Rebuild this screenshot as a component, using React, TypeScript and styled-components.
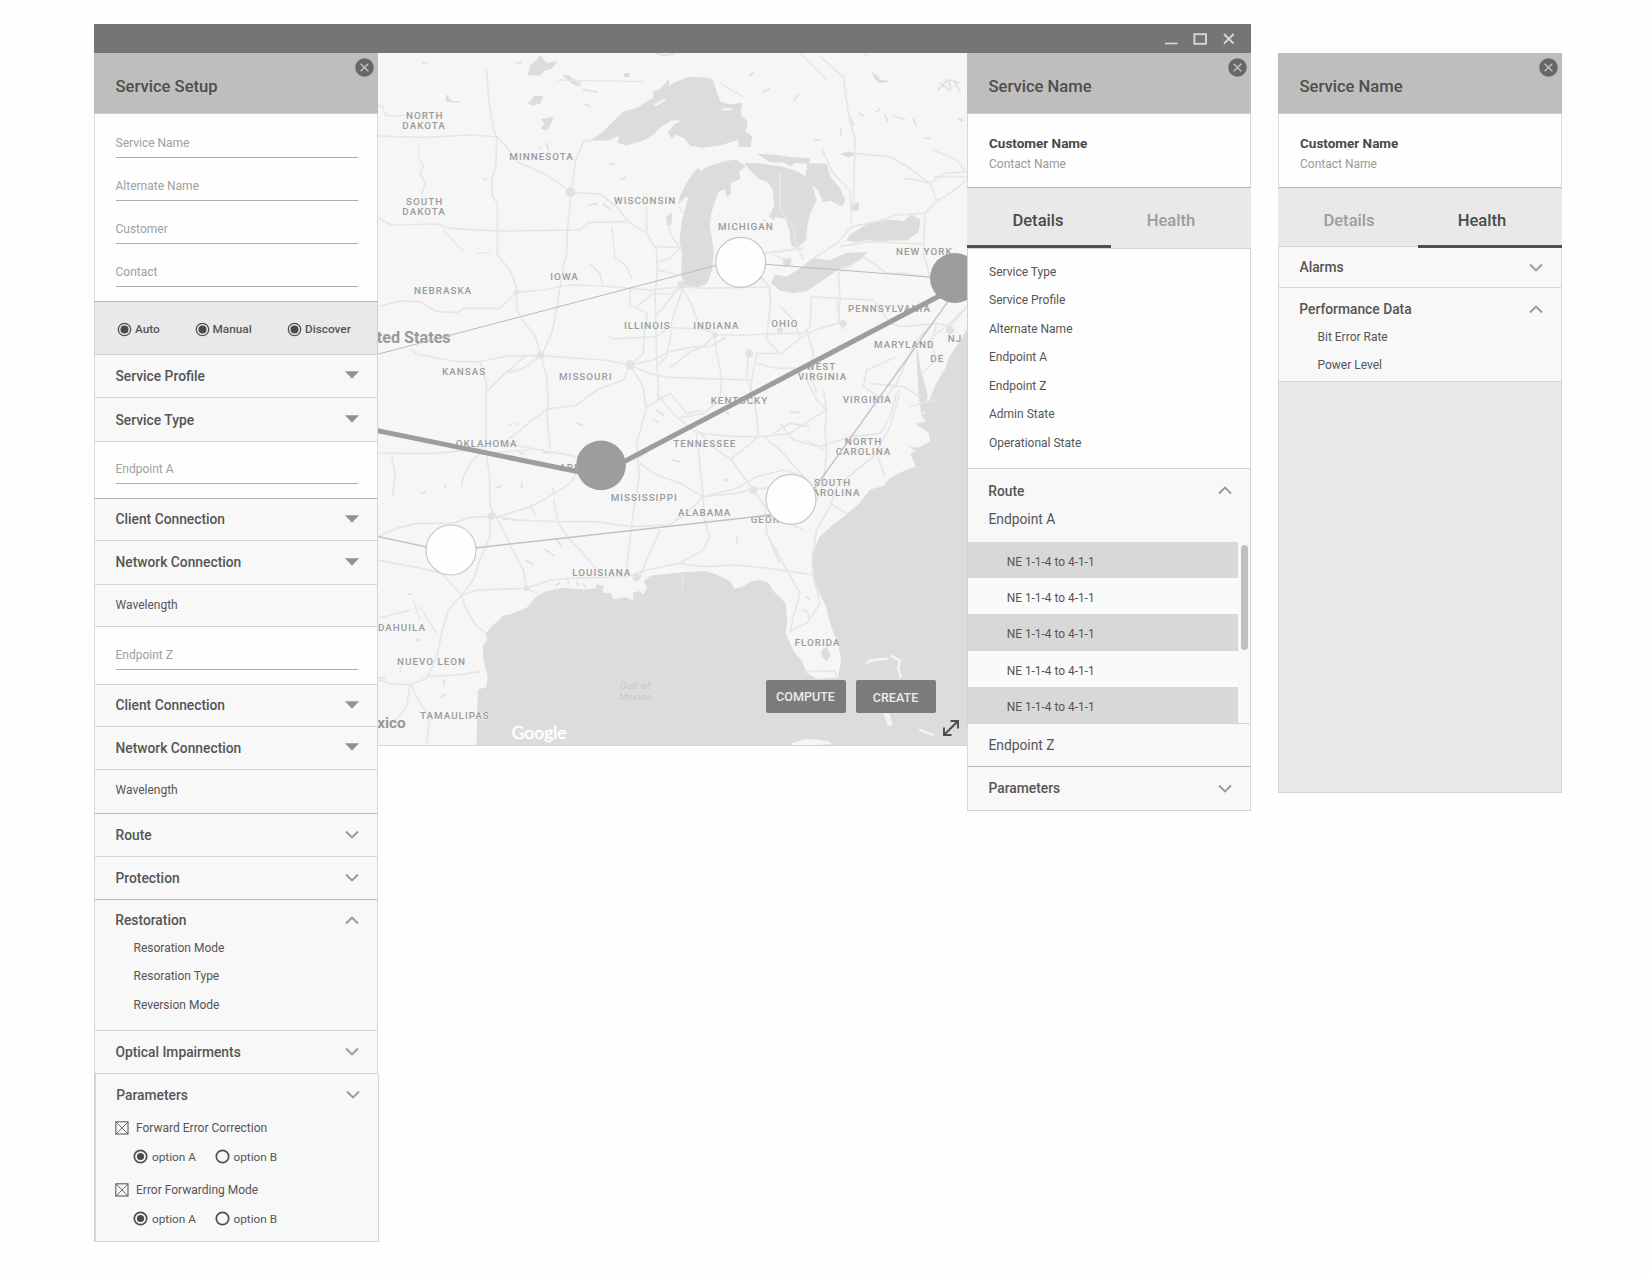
import React from "react";
import styled, { createGlobalStyle } from "styled-components";

const GlobalStyle = createGlobalStyle`
  * { box-sizing: border-box; }
  body {
    margin: 0;
    background: #fefefe;
    font-family: Roboto, "Liberation Sans", sans-serif;
    color: #555;
  }
`;

const Page = styled.main`
  display: flex;
  align-items: flex-start;
  width: 1650px;
  height: 1275px;
  padding: 24px 0 0 94px;
  gap: 27px;
  overflow: hidden;
`;

const AppWindow = styled.section`
  width: 1157px;
`;

const TitleBar = styled.header`
  display: flex;
  justify-content: flex-end;
  align-items: center;
  height: 29px;
  padding-right: 16px;
  background: #757575;
`;

const WindowBody = styled.div`
  display: flex;
  align-items: flex-start;
`;

const Panel = styled.aside<{ $detached?: boolean }>`
  width: 284px;
  flex: none;
  margin-top: ${(p) => (p.$detached ? 29 : 0)}px;
  height: ${(p) => (p.$detached ? "740px" : "auto")};
  background: ${(p) => (p.$detached ? "#e9e9e9" : "#f8f8f8")};
  box-shadow: inset 0 0 0 1px #d4d4d4;
`;

const PanelHeader = styled.div`
  display: flex;
  justify-content: space-between;
  height: 61px;
  padding: 5px 4px 0 21.5px;
  background: #bebebe;
  border-bottom: 1px solid #cfcfcf;
`;

const PanelTitle = styled.h2`
  margin: 19px 0 0;
  font-size: 16.6px;
  line-height: 20px;
  font-weight: 500;
  color: #4e4e4e;
`;

const FieldGroup = styled.div<{ $height: number; $top: number; $strong?: boolean }>`
  height: ${(p) => p.$height}px;
  padding: ${(p) => p.$top}px 20px 0 20.5px;
  background: #fefefe;
  border: solid #d8d8d8;
  border-width: 0 1px 1px;
  border-bottom-color: ${(p) => (p.$strong ? "#b4b4b4" : "#d6d6d6")};
`;

const Field = styled.div`
  height: 29px;
  margin: 0 -1px 14px 0;
  border-bottom: 1px solid #adadad;
  font-size: 12px;
  line-height: 29px;
  color: #a0a0a0;
`;

const ModeBar = styled.div`
  display: grid;
  grid-template-columns: 77.5px 92.5px 1fr;
  align-items: center;
  height: 53px;
  padding: 2px 0 0 22px;
  background: #e9e9e9;
  border: solid #d2d2d2;
  border-width: 0 1px 1px;
`;

const Choice = styled.label<{ $medium?: boolean }>`
  display: flex;
  align-items: center;
  gap: ${(p) => (p.$medium ? 3 : 4)}px;
  font-size: 11.8px;
  line-height: 16px;
  font-weight: ${(p) => (p.$medium ? 500 : 400)};
  color: #555;
  white-space: nowrap;
`;

const Row = styled.div<{ $height: number; $strong?: boolean; $light?: boolean; $regular?: boolean; $lift?: number }>`
  display: flex;
  align-items: center;
  justify-content: space-between;
  height: ${(p) => p.$height}px;
  padding: 0 18px ${(p) => p.$lift ?? 1}px 20.5px;
  border: solid #d8d8d8;
  border-width: 0 1px 1px;
  border-bottom-color: ${(p) => (p.$strong ? "#bcbcbc" : "#d6d6d6")};
  background: #f8f8f8;
  font-size: ${(p) => (p.$light ? 12 : 13.8)}px;
  font-weight: ${(p) => (p.$light || p.$regular ? 400 : 500)};
`;

const Section = styled.div<{ $height: number; $shift?: number }>`
  height: ${(p) => p.$height}px;
  margin: 0 ${(p) => -(p.$shift ?? 0)}px 0 ${(p) => p.$shift ?? 0}px;
  background: #f8f8f8;
  border: solid #d6d6d6;
  border-width: 0 1px 1px;
`;

const SectionHead = styled.div<{ $height: number; $top?: number }>`
  display: flex;
  align-items: center;
  justify-content: space-between;
  height: ${(p) => p.$height}px;
  padding: ${(p) => p.$top ?? 0}px 18px 0 20.3px;
  font-size: 13.8px;
  font-weight: 500;
`;

const SubItem = styled.div<{ $height?: number }>`
  height: ${(p) => p.$height ?? 28.4}px;
  line-height: ${(p) => p.$height ?? 28.4}px;
  padding-left: 38.5px;
  font-size: 12px;
`;

const CheckRow = styled.div`
  display: flex;
  align-items: center;
  gap: 7px;
  height: 28px;
  padding-left: 19px;
  font-size: 12px;
`;

const OptionRow = styled.div`
  display: grid;
  grid-template-columns: 81.5px 1fr;
  height: 29px;
  align-items: center;
  padding-left: 37px;
  margin-bottom: 5px;
`;

const MapArea = styled.div`
  position: relative;
  width: 589px;
  height: 693px;
  border-bottom: 1px solid #d4d4d4;
  overflow: hidden;
`;

const MapActions = styled.div`
  position: absolute;
  right: 31px;
  bottom: 32px;
  display: flex;
  gap: 10px;
`;

const ActionButton = styled.button<{ $drop?: number }>`
  width: 80px;
  height: 33px;
  padding: ${(p) => p.$drop ?? 0}px 1px 0 0;
  border: 0;
  border-radius: 2px;
  background: #7b7b7b;
  color: #ececec;
  font: 500 12.6px Roboto, sans-serif;
`;

const ExpandIcon = styled.svg`
  position: absolute;
  right: 7px;
  bottom: 8px;
`;

const Customer = styled.div`
  height: 74px;
  padding: 20px 21px 0;
  background: #fefefe;
  border: solid #d8d8d8;
  border-width: 0 1px 1px;
  border-bottom-color: #b6b6b6;
`;

const CustomerName = styled.div`
  font-size: 13.5px;
  line-height: 18px;
  font-weight: 700;
  color: #484848;
`;

const ContactName = styled.div`
  margin-top: 3px;
  font-size: 12px;
  line-height: 18px;
  color: #999;
`;

const Tabs = styled.div<{ $height: number; $split: number }>`
  display: grid;
  grid-template-columns: ${(p) => p.$split}px 1fr;
  height: ${(p) => p.$height}px;
  background: #e9e9e9;
  border-bottom: 1px solid #d4d4d4;
`;

const Tab = styled.div<{ $active?: boolean }>`
  height: 60px;
  padding-top: 22px;
  text-align: center;
  font-size: 16.6px;
  line-height: 22px;
  font-weight: 500;
  color: ${(p) => (p.$active ? "#4a4a4a" : "#9c9c9c")};
  border-bottom: ${(p) => (p.$active ? "3px solid #505050" : "0")};
`;

const TabText = styled.span<{ $nudge: number }>`
  margin-right: ${(p) => p.$nudge}px;
`;

const DetailList = styled.div`
  height: 220px;
  padding: 9px 20px 0;
  background: #fefefe;
  border: solid #d4d4d4;
  border-width: 0 1px 1px;
`;

const DetailItem = styled.div`
  height: 28.45px;
  padding-left: 1px;
  font-size: 12px;
  line-height: 28.4px;
`;

const RouteBlock = styled.div`
  background: #f8f8f8;
  border: solid #d4d4d4;
  border-width: 0 1px 1px;
`;

const EndpointTitle = styled.div`
  height: 30px;
  padding: 0 0 0 20.5px;
  font-size: 13.8px;
  line-height: 14px;
`;

const Scroller = styled.div`
  display: flex;
  justify-content: space-between;
  height: 181px;
`;

const Hops = styled.div`
  width: 270px;
`;

const Hop = styled.div`
  height: 36.2px;
  padding-left: 38.7px;
  font-size: 11.9px;
  line-height: 40px;
  background: #fafafa;
  &:nth-child(odd) { background: #d8d8d8; }
`;

const ScrollThumb = styled.div`
  width: 7px;
  height: 105px;
  margin: 3px 2px 0 0;
  border-radius: 3.5px;
  background: #bfbfbf;
`;

const CaretSvg = styled.svg`
  margin-bottom: 1px;
`;

function CloseIcon() {
  return (
    <svg width="19" height="19" viewBox="0 0 19 19">
      <circle cx="9.5" cy="9.5" r="9.3" fill="#676767" />
      <path d="M5.7 5.7l7.6 7.6M13.3 5.7l-7.6 7.6" stroke="#bebebe" strokeWidth="1.6" />
    </svg>
  );
}

function WindowControls() {
  return (
    <svg width="72" height="14" viewBox="0 0 72 14" fill="none" stroke="#d6d6d6">
      <path d="M2 11.5h12.6" strokeWidth="1.7" />
      <rect x="31.4" y="2.2" width="11.6" height="9.6" strokeWidth="1.9" />
      <path d="M61 2l9.6 9.6M70.6 2L61 11.6" strokeWidth="2" />
    </svg>
  );
}

function Caret() {
  return (
    <CaretSvg width="14" height="8" viewBox="0 0 14 8">
      <path d="M0 .3h14L7 7.7z" fill="#929292" />
    </CaretSvg>
  );
}

function Chevron({ up }: { up?: boolean }) {
  return (
    <svg width="14" height="9" viewBox="0 0 14 9" fill="none" stroke="#999" strokeWidth="1.9">
      <path d={up ? "M1 7.5l6-6 6 6" : "M1 1.5l6 6 6-6"} />
    </svg>
  );
}

function Radio({ on = true, thick }: { on?: boolean; thick?: boolean }) {
  return (
    <svg width="15" height="15" viewBox="0 0 15 15">
      <circle cx="7.5" cy="7.5" r="6.2" fill="none" stroke="#4f4f4f" strokeWidth={thick ? 1.7 : 1.3} />
      {on && <circle cx="7.5" cy="7.5" r={thick ? 3.6 : 4} fill="#4a4a4a" />}
    </svg>
  );
}

function CheckBox() {
  return (
    <svg width="14" height="14" viewBox="0 0 14 14" fill="none" stroke="#5c5c5c">
      <rect x=".8" y=".8" width="12.2" height="12.2" strokeWidth="1.1" />
      <path d="M1 1l12 12M13 1L1 13" strokeWidth=".9" />
    </svg>
  );
}

/* The map is drawn at three units per screen pixel. */
const water = [
  "M668 300L700 275 735 240 760 217 800 205 850 175 850 155 870 150 895 120 897 138 922 125 960 112 1020 115 1028 122 1040 160 1050 185 1080 195 1115 190 1110 225 1132 245 1125 275 1145 290 1140 320 1108 320 1105 298 1050 315 995 322 960 315 945 295 920 283 905 292 895 278 912 255 938 240 905 240 870 262 850 282 820 300 770 315 745 308 750 285 715 300Z",
  "M1020 378L1065 365 1100 360 1125 380 1105 395 1110 415 1080 430 1082 460 1072 470 1065 445 1045 455 1032 490 1022 520 1018 560 1025 600 1030 640 1025 690 1010 730 980 742 950 735 935 710 937 640 930 600 938 540 957 470 945 470 925 492 933 465 950 430 975 395 985 385 990 395Z",
  "M1125 370L1170 372 1230 380 1280 395 1315 415 1330 450 1338 480 1320 520 1310 560 1307 600 1280 622 1265 615 1260 570 1247 535 1215 530 1212 540 1200 530 1214 495 1210 450 1195 425 1165 415 1145 395Z",
  "M1313 372L1368 372 1380 410 1405 440 1425 480 1415 498 1380 480 1360 485 1345 450 1315 425 1308 398Z",
  "M1165 343L1205 345 1270 353 1320 356 1315 370 1270 368 1265 378 1240 366 1200 365Z",
  "M1205 730L1215 705 1250 712 1285 690 1330 655 1345 658 1380 662 1430 640 1490 638 1470 660 1400 690 1350 725 1310 752 1270 758 1230 750Z",
  "M1430 600L1445 582 1468 568 1500 548 1560 540 1600 545 1625 525 1650 540 1645 575 1610 600 1560 600 1520 605 1500 598 1460 605Z",
  "M1641 930L1650 985 1662 1030 1672 1070 1665 1110 1655 1120 1648 1070 1645 1020Z",
  "M1791 870L1770 905 1740 950 1725 990 1700 1030 1680 1080 1665 1095 1668 1118 1655 1125 1670 1145 1640 1153 1678 1178 1682 1205 1645 1225 1622 1222 1640 1235 1622 1242 1640 1280 1600 1295 1560 1315 1540 1340 1500 1350 1470 1390 1430 1425 1390 1455 1350 1490 1330 1540 1330 1600 1345 1650 1370 1700 1378 1735 1385 1760 1405 1810 1415 1860 1405 1915 1340 1918 1310 1900 1295 1865 1270 1835 1245 1780 1250 1740 1245 1690 1210 1655 1195 1630 1170 1622 1145 1625 1120 1640 1093 1648 1080 1625 1040 1605 1010 1595 960 1597 920 1600 842 1608 822 1625 832 1640 822 1665 808 1655 790 1660 792 1685 768 1673 730 1680 720 1660 700 1660 690 1645 640 1650 580 1645 530 1655 500 1670 470 1705 440 1717 420 1725 400 1728 385 1745 370 1755 350 1780 352 1800 340 1818 342 1860 355 1910 350 1942 325 1950 321 2120 1791 2120Z",
  "M475 105L482 75 500 62 510 48 530 70 560 65 545 85 525 90 510 105Z",
  "M475 190L495 168 518 170 510 190 488 195Z",
  "M515 238L548 232 540 255 530 270 515 265 525 250Z",
  "M230 165L240 182 270 187 245 185 228 182Z",
  "M1412 342L1435 335 1455 342 1435 350Z",
  "M1357 1830L1370 1822 1380 1845 1370 1862 1357 1850Z",
  "M890 530L905 520 902 555 892 555Z",
  "M1440 495L1465 490 1465 508 1450 512Z",
  "M680 1635L700 1640 696 1655 680 1650Z",
  "M1240 660L1262 655 1260 675 1243 680Z",
  "M580 105L596 108 612 122 632 138 615 134 595 122Z",
  "M762 102L778 100 776 110 764 110Z",
  "M1508 100L1522 108 1528 120 1556 124 1530 128 1516 118Z",
];

const ponds =
  "M610 118l22 10M640 148l40 8M645 192l15 8M158 69h12M860 40l20 6 30-4M1705 150l22-25 18-5 22 8M1710 130l30 20M1735 118l8 32M1750 120l20 35M1440 230l10 25M1468 220l14 8M1520 215l10-8M1545 225l8 18M1570 228l35 12M1630 235l8 22M1412 268v20M1335 300h16M1665 295h16M1180 155l18-8M1138 108l12-10M1765 236l14 4M1272 180l14-18M440 68h14M530 310l5 20M505 322l8 6M340 418h10M720 372h14M654 498l18-8 10 6M700 492l18 14M752 420l15-8M525 1528l25 18M560 1495l14 26M470 1562l20 12M378 1343l18-5M620 1150l18 6M415 1155h8M440 1152h6M450 1240h14M520 1238h20M226 1345v-8M155 1360l12-4M400 1438h15M425 1440h20M640 1632l8 8M560 1635l8-6M595 1622v10M620 1625l4 10M1180 540l10 8M1500 1380l15 8M1310 1670l8 10M1300 1710l12 5M1315 1722v8M222 1920v15M215 1970l12-8M140 1800h8M115 1662h12M25 1914h20M548 1345l6 18M810 1250l20-14M905 1260l25 5M860 1110l20 15M850 1140l15 6M1680 910l8 14M1765 235l10 8M1060 1100h12M1260 1115l30 3M1065 1320h10M1070 1118l8 4M455 1330v14M1100 1490v10M1102 1505v8";

const roads = [
  "M350 90L356 180 370 265 380 290 378 375 366 420 366 465 382 490 382 645 420 690 440 745 440 810 465 850 495 885 512 945 530 1010 535 1100 530 1110 540 1230",
  "M22 288L160 292 300 285 380 290 410 320 440 365 520 400 560 425 602 457 600 500 592 570 590 640 580 680 570 740 562 800 545 880 515 945",
  "M602 457L612 400 617 360 640 305 668 300",
  "M602 457L690 462 740 500 775 545 830 580 860 630 862 700 855 760 857 830 860 960 866 1060 862 1080",
  "M22 533L65 555 200 552 240 565 380 573 630 570 655 547 770 545",
  "M22 800L90 783 150 785 200 815 260 818 285 805 390 805 440 757 520 750 600 735 700 738 780 745 840 750 935 740",
  "M120 925L140 942 260 965 330 965 410 948 512 947 700 960 780 975 850 960 900 935 960 922 1020 920 1070 890",
  "M780 975L835 1000 900 1012 1010 1016 1145 1020 1160 940 1235 940 1290 895 1330 872 1405 850",
  "M780 975L760 1020 680 1050 640 1080 620 1095 530 1108 480 1145 440 1180 410 1200",
  "M512 947L460 985 415 998 M465 950L400 1005 350 1055 348 1025 330 965M348 1055V1240L358 1300 360 1400 375 1425 385 1440 430 1535 460 1590 470 1645",
  "M780 975L820 940 822 880 832 820 780 795 780 745M715 890L730 897 860 890 900 860 940 740M780 975L820 1040 828 1110 800 1210 808 1310 785 1450 770 1590",
  "M800 800L850 760 900 762 935 740 960 785 990 860 1035 885 1130 885 1240 880 1300 880 1320 860 1325 770",
  "M935 740L1000 745 1130 742 1200 742M830 500V580M850 620L925 622M862 665L900 655 930 625 900 580 895 545M862 690L925 705M660 670L690 700 697 735",
  "M860 825L930 740M900 862L1035 870M905 870L890 950 866 975M1035 885L1040 940 1055 1010 1050 1080 1000 1120 920 1135",
  "M1035 885L1000 920 960 935 900 985M1135 940L1130 1020 1160 1080M1145 1020L1140 1060",
  "M1325 770L1400 775 1510 780 1560 850 1600 860 1700 850 1740 860 1790 800M1400 780L1410 850 1420 870",
  "M1290 890L1270 840 1230 800M1160 970L1220 985 1280 985 1310 1020 1340 1080 1370 1110",
  "M1230 940L1190 900 1200 800 1200 745 1150 680 1115 660M1205 790L1195 745M1170 720L1180 640 1300 625M1250 660L1210 645",
  "M1230 395V510L1270 560 1280 610 1300 660M1330 655L1400 610 1445 560 1520 545 1580 525 1665 520 1700 485 1760 445 1791 420",
  "M1355 325L1375 370 1390 400 1440 450 1445 550M1600 415L1640 420 1680 430 1700 480M1690 410L1791 410M1350 50L1420 110 1435 220 1455 300 1450 500",
  "M1665 520L1660 640 1680 710M1410 620L1500 605 1660 612M1405 850L1410 780 1405 700 1480 650M1480 650L1550 700 1600 700 1680 712",
  "M1450 340L1560 350 1620 385 1680 430M1690 330L1760 360 1791 400M1680 430L1720 400 1791 395",
  "M1310 870L1330 940 1320 1000 1340 1060M1690 850L1640 900 1620 940 1580 1030 1540 1080M1540 1080L1480 1040 1490 990 1580 950",
  "M1790 800L1740 850 1700 880 1660 920M1700 850L1680 920M1500 1030L1600 1040 1650 1070",
  "M22 1240L200 1240 330 1225 390 1200 430 1215 620 1250 650 1230",
  "M330 1240L300 1270 280 1310 275 1340M65 1245L75 1300 68 1370M350 1240L480 1230",
  "M22 1490L80 1465 140 1450 250 1450 300 1432 345 1430 385 1430 480 1400 530 1375 600 1330 620 1300",
  "M385 1430L440 1440 560 1445 680 1445 780 1460 900 1455 960 1410 1000 1370 1100 1360 1150 1345",
  "M22 1560L180 1590 215 1600 275 1665 235 1710 215 1780 200 1850 170 1915 120 1935 60 1930",
  "M275 1665L320 1650 470 1645 500 1660M275 1665L285 1700 320 1760 350 1780M275 1665L310 1620 330 1560 360 1490 360 1430",
  "M470 1645L540 1620 600 1615 770 1610 830 1590 925 1570 1000 1580 1100 1575 1200 1585 1330 1605",
  "M550 1375L565 1450 600 1500 640 1540 680 1590M480 1395L500 1430M870 1470L830 1560 810 1610M920 1575L1000 1530 1020 1490 1000 1430 1000 1370",
  "M810 1270L860 1305 930 1330 1000 1370 1100 1345 1160 1310 1240 1290 1280 1300M920 1130L980 1180 1000 1370M980 1170L1040 1230 1080 1255 1150 1350 1185 1400 1190 1480 1230 1570",
  "M990 1180L1090 1190 1180 1190 1260 1180 1320 1140 1370 1110 1365 1170 1370 1240 1360 1330 1340 1380",
  "M1085 1255L1130 1220 1165 1190M1180 1190L1230 1230 1310 1320M1230 1150L1270 1200 1350 1220 1440 1190 1530 1180 1560 1130",
  "M1165 1190L1160 1120 1150 1080M1320 1160L1260 1150 1210 1180M1370 1110L1360 1050M1560 1130L1580 1060 1590 1050",
  "M1590 1060L1560 1160 1510 1250 1460 1290 1400 1340 1380 1400 1340 1470 1325 1560 1330 1610 1350 1690",
  "M1150 1350L1280 1330M1300 1470L1200 1420M1380 1390L1430 1420M1520 1240L1545 1310",
  "M1190 1480L1240 1570 1290 1660 1270 1730 1260 1780M1265 1770L1310 1750 1350 1690M1300 1895L1395 1893 1400 1910",
  "M820 1055L830 1100 900 1060M900 1060L950 1120 1000 1110M860 1060L900 1110 920 1130M940 1600L935 1650",
  "M170 1910L260 1905 330 1895M120 1930L150 1990 180 2030 170 2110M60 1930L22 1920M120 1935L110 2000 70 2050",
];

const streams =
  "M22 195L38 200 45 225 70 230 100 225M147 310L145 350 160 380 150 400 165 430 155 465M220 570L260 615 285 635M320 640L360 638M725 560L735 650 770 680 785 715M1480 40L1500 50M1655 1000L1700 960 1690 930M150 1700L200 1780M130 1680L150 1740M100 1850L90 1900M1050 130L1120 170M560 120L820 125M1290 40L1370 120M1620 1100L1700 1080M925 500L945 525M22 1735L120 1710M1360 1230L1310 1200";

const islands =
  "M1490 1868L1515 1860 1550 1856M1565 1848L1590 1862 1585 1885 1592 1910M1500 1860L1530 1858M1552 2025L1558 2050M1650 2070L1690 2085M1698 1835";

type MapLabel = [string, number, number];
const labels: MapLabel[] = [
  ["NORTH", 108, 238], ["DAKOTA", 97, 268], ["MINNESOTA", 418, 360],
  ["SOUTH", 108, 496], ["DAKOTA", 97, 525], ["WISCONSIN", 732, 493],
  ["IOWA", 541, 721], ["NEBRASKA", 132, 761], ["ILLINOIS", 762, 868],
  ["KANSAS", 216, 1006], ["MISSOURI", 567, 1019], ["MICHIGAN", 1044, 569],
  ["INDIANA", 970, 868], ["OHIO", 1204, 862], ["NEW YORK", 1578, 646],
  ["PENNSYLVANIA", 1434, 816], ["MARYLAND", 1512, 924], ["NJ", 1733, 906],
  ["DE", 1681, 966], ["WEST", 1308, 989], ["VIRGINIA", 1284, 1019],
  ["KENTUCKY", 1022, 1091], ["VIRGINIA", 1418, 1090], ["OKLAHOMA", 257, 1220],
  ["TENNESSEE", 910, 1220], ["NORTH", 1424, 1216], ["CAROLINA", 1397, 1244],
  ["SOUTH", 1332, 1339], ["CAROLINA", 1305, 1369], ["MISSISSIPPI", 722, 1383],
  ["ALABAMA", 924, 1429], ["GEORGIA", 1142, 1450], ["LOUISIANA", 607, 1608],
  ["FLORIDA", 1274, 1819], ["ARKANSAS", 568, 1292], ["DAHUILA", 24, 1773],
  ["NUEVO LEON", 81, 1876], ["TAMAULIPAS", 150, 2036],
];

function NetworkMap() {
  return (
    <svg width="589" height="692" viewBox="24 39 1767 2076" fontFamily="Roboto, sans-serif">
      <rect x="24" y="39" width="1767" height="2076" fill="#f6f6f6" />
      <g fill="#dcdcdc" stroke="#dcdcdc" strokeWidth="3" strokeLinejoin="round">
        {water.map((d) => <path key={d} d={d} />)}
      </g>
      <path d={ponds} fill="none" stroke="#e0e0e0" strokeWidth="5" strokeLinecap="round" />
      <g fill="#f6f6f6">
        <path d="M850 195L885 175 890 178 860 198ZM1050 206L1075 204 1095 208 1065 212ZM1250 378L1290 376 1312 384 1305 400 1270 390Z" />
        <path d="M1265 2110L1310 2096 1350 2100 1380 2106 1385 2112 1340 2115 1265 2115ZM1540 2020L1558 2020 1568 2055 1555 2058Z" />
      </g>
      <path d={islands} fill="none" stroke="#f4f4f4" strokeWidth="7" strokeLinecap="round" />
      <g fill="none" stroke="#e6e6e6" strokeWidth="5" strokeLinejoin="round">
        {roads.map((d) => <path key={d} d={d} />)}
        <path d={streams} stroke="#e5e5e5" strokeWidth="4" />
      </g>
      <g fill="#e2e2e2">
        <circle cx="602" cy="457" r="15" /><circle cx="512" cy="945" r="11" />
        <circle cx="780" cy="975" r="14" /><circle cx="935" cy="735" r="13" />
        <circle cx="440" cy="757" r="8" /><circle cx="1035" cy="885" r="8" />
        <circle cx="1138" cy="940" r="12" /><circle cx="1230" cy="870" r="9" />
        <circle cx="1150" cy="1350" r="12" /><circle cx="1740" cy="870" r="12" />
        <circle cx="800" cy="1612" r="12" /><circle cx="1420" cy="850" r="11" />
        <circle cx="365" cy="1428" r="11" /><circle cx="470" cy="1645" r="8" />
      </g>
      <g fill="#9b9b9b" stroke="#f6f6f6" strokeWidth="3" paintOrder="stroke" fontSize="29.5" fontWeight="500" letterSpacing="3">
        {labels.map(([t, x, y]) => <text key={t + x + y} x={x} y={y}>{t}</text>)}
      </g>
      <g fill="#989898" fontSize="48.5" fontWeight="700" textAnchor="end">
        <text x="242" y="909">ted States</text>
        <text x="107" y="2065" fontSize="46">xico</text>
      </g>
      <g fill="#c8c8c8" fontSize="29" fontStyle="italic">
        <text x="750" y="1947" letterSpacing="1">Gulf of</text>
        <text x="747" y="1981" letterSpacing="1">Mexico</text>
      </g>
      <text x="425" y="2096" fill="#fff" stroke="#fff" strokeWidth="1.4" fontSize="52.5" fontFamily="Lato, sans-serif">Google</text>
      <g fill="none" stroke="#c2c2c2" strokeWidth="4.5">
        <path d="M22 943L1112 657" stroke="#bababa" strokeWidth="3" />
        <path d="M1112 667L1755 717" stroke="#bababa" strokeWidth="3" />
        <path d="M1740 776L1320 1364" />
        <path d="M22 1489L243 1537" />
        <path d="M243 1532L1262 1418" />
      </g>
      <path d="M22 1172L693 1309M693 1301L1755 743" fill="none" stroke="#9d9d9d" strokeWidth="15" />
      <circle cx="693" cy="1276" r="74.5" fill="#9d9d9d" />
      <circle cx="1755" cy="714" r="75" fill="#9d9d9d" />
      <g fill="#fefefe" stroke="#c6c6c6" strokeWidth="3.5">
        <circle cx="1112" cy="667" r="75" />
        <circle cx="1263" cy="1378" r="75" />
        <circle cx="243" cy="1530" r="75" />
      </g>
    </svg>
  );
}

function Header({ title }: { title: string }) {
  return (
    <PanelHeader>
      <PanelTitle>{title}</PanelTitle>
      <CloseIcon />
    </PanelHeader>
  );
}

function CustomerCard() {
  return (
    <Customer>
      <CustomerName>Customer Name</CustomerName>
      <ContactName>Contact Name</ContactName>
    </Customer>
  );
}

function ErrorSetting({ name }: { name: string }) {
  return (
    <>
      <CheckRow><CheckBox />{name}</CheckRow>
      <OptionRow>
        <Choice><Radio thick />option A</Choice>
        <Choice><Radio thick on={false} />option B</Choice>
      </OptionRow>
    </>
  );
}

function SetupPanel() {
  return (
    <Panel>
      <Header title="Service Setup" />
      <FieldGroup $height={188} $top={15} $strong>
        {["Service Name", "Alternate Name", "Customer", "Contact"].map((f) => (
          <Field key={f}>{f}</Field>
        ))}
      </FieldGroup>
      <ModeBar>
        <Choice $medium><Radio />Auto</Choice>
        <Choice $medium><Radio />Manual</Choice>
        <Choice $medium><Radio />Discover</Choice>
      </ModeBar>
      <Row $height={43}>Service Profile<Caret /></Row>
      <Row $height={44} $lift={0}>Service Type<Caret /></Row>
      <FieldGroup $height={57} $top={13} $strong><Field>Endpoint A</Field></FieldGroup>
      <Row $height={42}>Client Connection<Caret /></Row>
      <Row $height={44}>Network Connection<Caret /></Row>
      <Row $height={42} $light $lift={2}>Wavelength</Row>
      <FieldGroup $height={58} $top={14}><Field>Endpoint Z</Field></FieldGroup>
      <Row $height={42}>Client Connection<Caret /></Row>
      <Row $height={43}>Network Connection<Caret /></Row>
      <Row $height={44} $light $lift={3} $strong>Wavelength</Row>
      <Row $height={43}>Route<Chevron /></Row>
      <Row $height={43} $strong>Protection<Chevron /></Row>
      <Section $height={131}>
        <SectionHead $height={34} $top={6}>Restoration<Chevron up /></SectionHead>
        <SubItem>Resoration Mode</SubItem>
        <SubItem>Resoration Type</SubItem>
        <SubItem>Reversion Mode</SubItem>
      </Section>
      <Row $height={43}>Optical Impairments<Chevron /></Row>
      <Section $height={168} $shift={1}>
        <SectionHead $height={40} $top={1}>Parameters<Chevron /></SectionHead>
        <ErrorSetting name="Forward Error Correction" />
        <ErrorSetting name="Error Forwarding Mode" />
      </Section>
    </Panel>
  );
}

const details = [
  "Service Type", "Service Profile", "Alternate Name", "Endpoint A",
  "Endpoint Z", "Admin State", "Operational State",
];

function DetailsPanel() {
  return (
    <Panel>
      <Header title="Service Name" />
      <CustomerCard />
      <Tabs $height={61} $split={144}>
        <Tab $active><TabText $nudge={2}>Details</TabText></Tab>
        <Tab><TabText $nudge={20}>Health</TabText></Tab>
      </Tabs>
      <DetailList>
        {details.map((d) => <DetailItem key={d}>{d}</DetailItem>)}
      </DetailList>
      <RouteBlock>
        <SectionHead $height={43}>Route<Chevron up /></SectionHead>
        <EndpointTitle>Endpoint A</EndpointTitle>
        <Scroller>
          <Hops>
            {[0, 1, 2, 3, 4].map((n) => <Hop key={n}>NE 1-1-4 to 4-1-1</Hop>)}
          </Hops>
          <ScrollThumb />
        </Scroller>
      </RouteBlock>
      <Row $height={43} $strong $regular>Endpoint Z</Row>
      <Row $height={44}>Parameters<Chevron /></Row>
    </Panel>
  );
}

function HealthPanel() {
  return (
    <Panel $detached>
      <Header title="Service Name" />
      <CustomerCard />
      <Tabs $height={59} $split={140}>
        <Tab><TabText $nudge={-2}>Details</TabText></Tab>
        <Tab $active><TabText $nudge={16}>Health</TabText></Tab>
      </Tabs>
      <Row $height={41} $lift={0}>Alarms<Chevron /></Row>
      <Section $height={94}>
        <SectionHead $height={35} $top={7}>Performance Data<Chevron up /></SectionHead>
        <SubItem $height={28}>Bit Error Rate</SubItem>
        <SubItem>Power Level</SubItem>
      </Section>
    </Panel>
  );
}

export default function App() {
  return (
    <>
      <GlobalStyle />
      <Page>
        <AppWindow>
          <TitleBar><WindowControls /></TitleBar>
          <WindowBody>
            <SetupPanel />
            <MapArea>
              <NetworkMap />
              <MapActions>
                <ActionButton>COMPUTE</ActionButton>
                <ActionButton $drop={2}>CREATE</ActionButton>
              </MapActions>
              <ExpandIcon width="18" height="18" viewBox="0 0 18 18" fill="none" stroke="#4c4c4c" strokeWidth="1.9">
                <path d="M8.5 2H16V9.5M16 2L2 16M2 8.5V16H9.5" />
              </ExpandIcon>
            </MapArea>
            <DetailsPanel />
          </WindowBody>
        </AppWindow>
        <HealthPanel />
      </Page>
    </>
  );
}
